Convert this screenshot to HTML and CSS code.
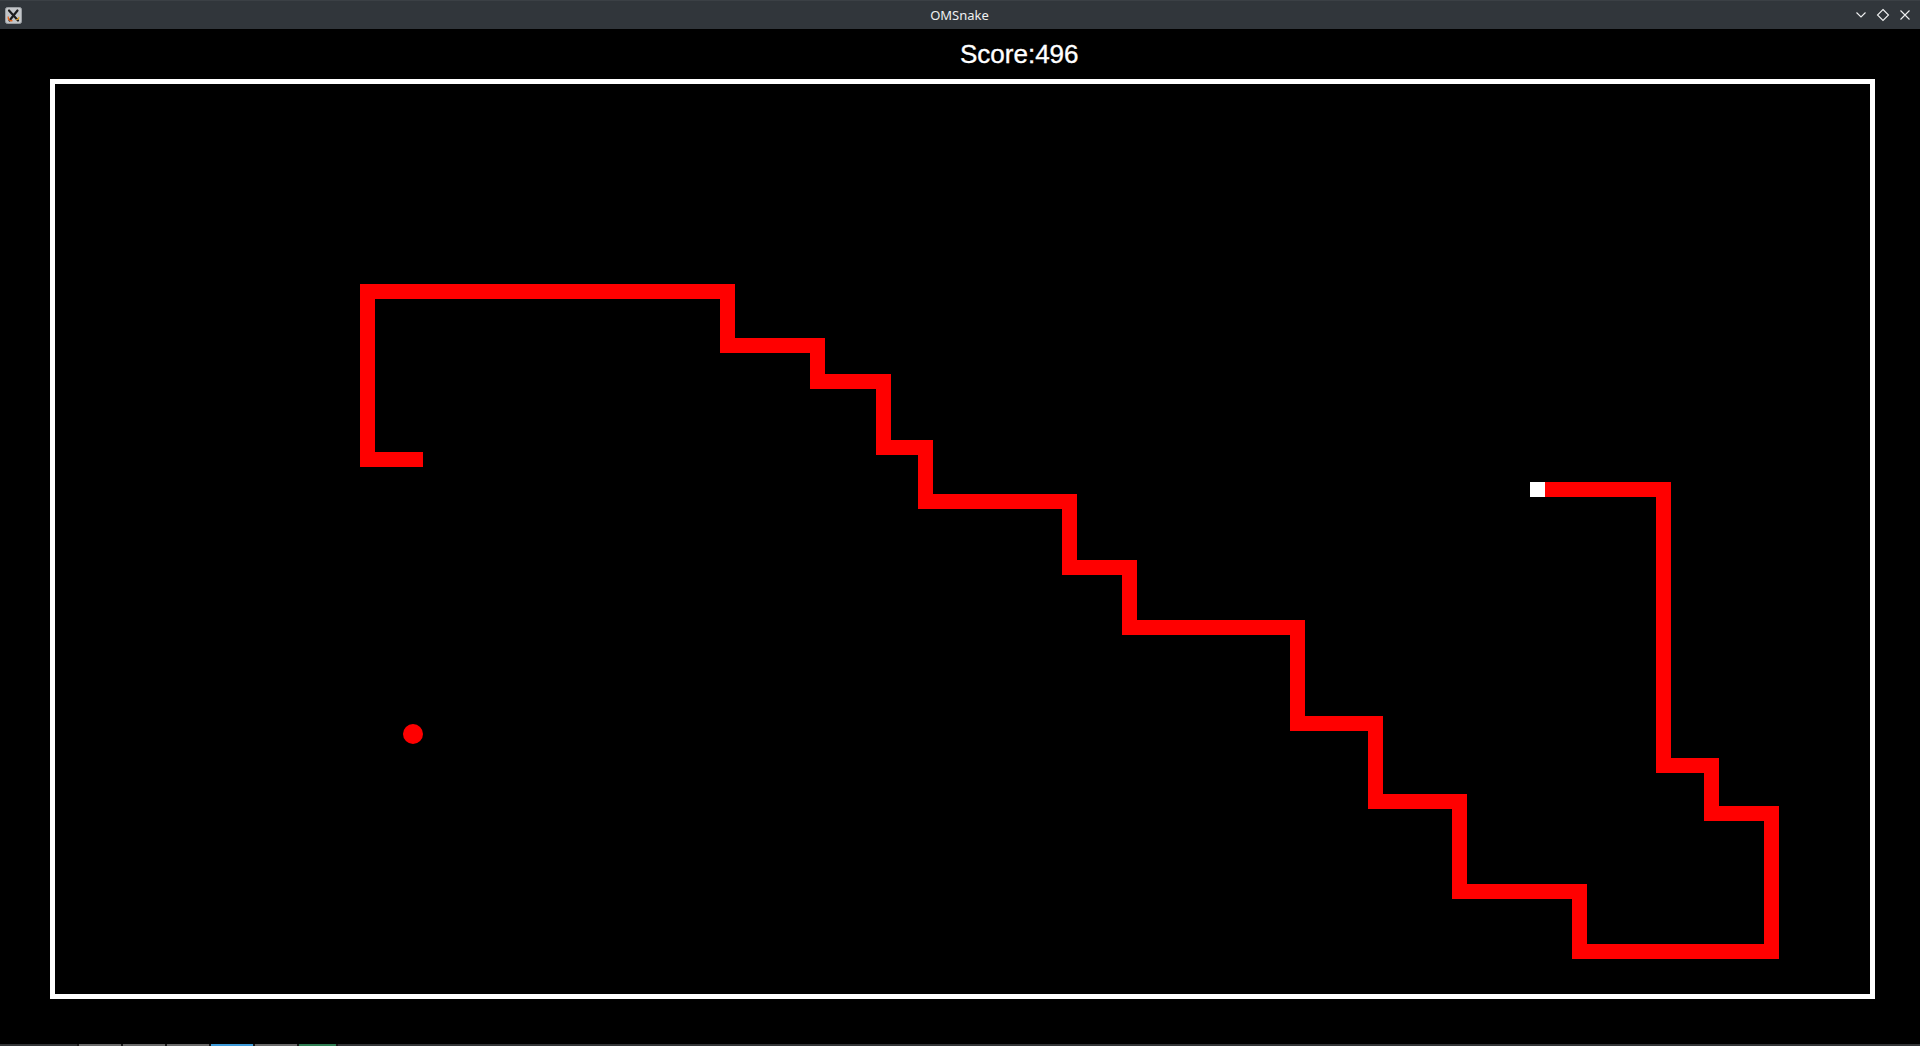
FILE: index.html
```html
<!DOCTYPE html>
<html lang="en">
<head>
<meta charset="utf-8">
<title>OMSnake</title>
<link rel="stylesheet" href="styles.css">
</head>
<body>
<div class="window">
  <header class="titlebar">
    <div class="app-icon">
      <svg width="17" height="17" viewBox="0 0 17 17">
        <rect x="0.5" y="0.5" width="16" height="16" rx="2" fill="#c3c6c9" stroke="#9a9ea2"/>
        <path d="M4 3.5 L13 13.5 M12.5 3.5 L4.5 13.5" stroke="#1d1d1d" stroke-width="2.2" stroke-linecap="round"/>
        <path d="M3.2 9.5 C2.8 12.5 5 14.2 7.5 13.6" stroke="#e8661c" stroke-width="1.3" fill="none"/>
        <path d="M11 12.8 C13 12.8 14.2 11.5 13.8 9.8" stroke="#e8a11c" stroke-width="1.1" fill="none"/>
      </svg>
    </div>
    <div class="title">OMSnake</div>
    <div class="controls">
      <svg class="ctl" width="12" height="12" viewBox="0 0 12 12"><path d="M1.5 3.5 L6 8 L10.5 3.5" stroke="#eff0f1" stroke-width="1.1" fill="none"/></svg>
      <svg class="ctl" width="14" height="14" viewBox="0 0 14 14"><path d="M7 1.5 L12.5 7 L7 12.5 L1.5 7 Z" stroke="#eff0f1" stroke-width="1.1" fill="none"/></svg>
      <svg class="ctl" width="12" height="12" viewBox="0 0 12 12"><path d="M1.5 1.5 L10.5 10.5 M10.5 1.5 L1.5 10.5" stroke="#eff0f1" stroke-width="1.1" fill="none"/></svg>
    </div>
  </header>
  <main class="game">
    <div class="score-row"><span class="score">Score:496</span></div>
    <div class="board">
      <svg class="field" width="1815" height="910" viewBox="55 84 1815 910">
        <polyline class="snake" points="423,459.5 367.5,459.5 367.5,291.5 727.5,291.5 727.5,345.5 817.5,345.5 817.5,381.5 883.5,381.5 883.5,447.5 925.5,447.5 925.5,501.5 1069.5,501.5 1069.5,567.5 1129.5,567.5 1129.5,627.5 1297.5,627.5 1297.5,723.5 1375.5,723.5 1375.5,801.5 1459.5,801.5 1459.5,891.5 1579.5,891.5 1579.5,951.5 1771.5,951.5 1771.5,813.5 1711.5,813.5 1711.5,765.5 1663.5,765.5 1663.5,489.5 1545,489.5"/>
        <rect class="head" x="1530" y="482" width="15" height="15"/>
        <circle class="food" cx="413" cy="734" r="10"/>
      </svg>
    </div>
  </main>
  <footer class="taskstrip">
    <span class="seg s-dark" style="width:77px"></span>
    <span class="seg s-gray" style="width:42px"></span>
    <span class="seg s-gray" style="width:42px"></span>
    <span class="seg s-gray" style="width:42px"></span>
    <span class="seg s-blue" style="width:42px"></span>
    <span class="seg s-gray" style="width:42px"></span>
    <span class="seg s-green" style="width:37px"></span>
    <span class="seg s-dark s-fill"></span>
  </footer>
</div>
</body>
</html>
```

FILE: styles.css
```css
* { box-sizing: border-box; }
html, body {
  margin: 0;
  padding: 0;
  background: #000;
  width: 1920px;
  height: 1046px;
  overflow: hidden;
}
.window {
  display: flex;
  flex-direction: column;
  height: 1046px;
}
.titlebar {
  height: 29px;
  flex: none;
  background: #31363b;
  border-top: 1px solid #3b4045;
  display: grid;
  grid-template-columns: 1fr auto 1fr;
  align-items: center;
  padding: 0 6px 0 5px;
}
.app-icon {
  width: 17px;
  height: 17px;
  display: flex;
}
.title {
  text-align: center;
  font-family: "Noto Sans", sans-serif;
  font-size: 13px;
  color: #eff0f1;
  line-height: 28px;
}
.controls {
  display: flex;
  align-items: center;
  justify-content: flex-end;
  gap: 9px;
  margin-right: 3px;
}
.ctl { display: block; }
.game {
  flex: none;
  display: flex;
  flex-direction: column;
}
.score-row {
  padding-top: 10px;
  padding-left: 960px;
  height: 40px;
}
.score {
  display: block;
  font-family: "Liberation Sans", Arial, sans-serif;
  font-size: 26px;
  line-height: 30px;
  color: #fff;
  -webkit-text-stroke: 0.35px #fff;
  white-space: nowrap;
}
.board {
  margin-top: 10px;
  margin-left: 50px;
  width: 1825px;
  height: 920px;
  border: 5px solid #fff;
  background: #000;
}
.field { display: block; }
.snake {
  fill: none;
  stroke: #ff0000;
  stroke-width: 15;
  stroke-linejoin: miter;
  stroke-linecap: butt;
  shape-rendering: crispEdges;
}
.head { fill: #fff; shape-rendering: crispEdges; }
.food { fill: #ff0000; }
.taskstrip {
  margin-top: auto;
  height: 2px;
  display: flex;
  gap: 2px;
  background: #1a1a1a;
}
.seg { display: block; height: 2px; }
.s-dark { background: #333537; }
.s-gray { background: #6a6a6a; }
.s-blue { background: #3d9ad8; }
.s-green { background: #2f7d52; }
.s-fill { flex: 1; }
```
